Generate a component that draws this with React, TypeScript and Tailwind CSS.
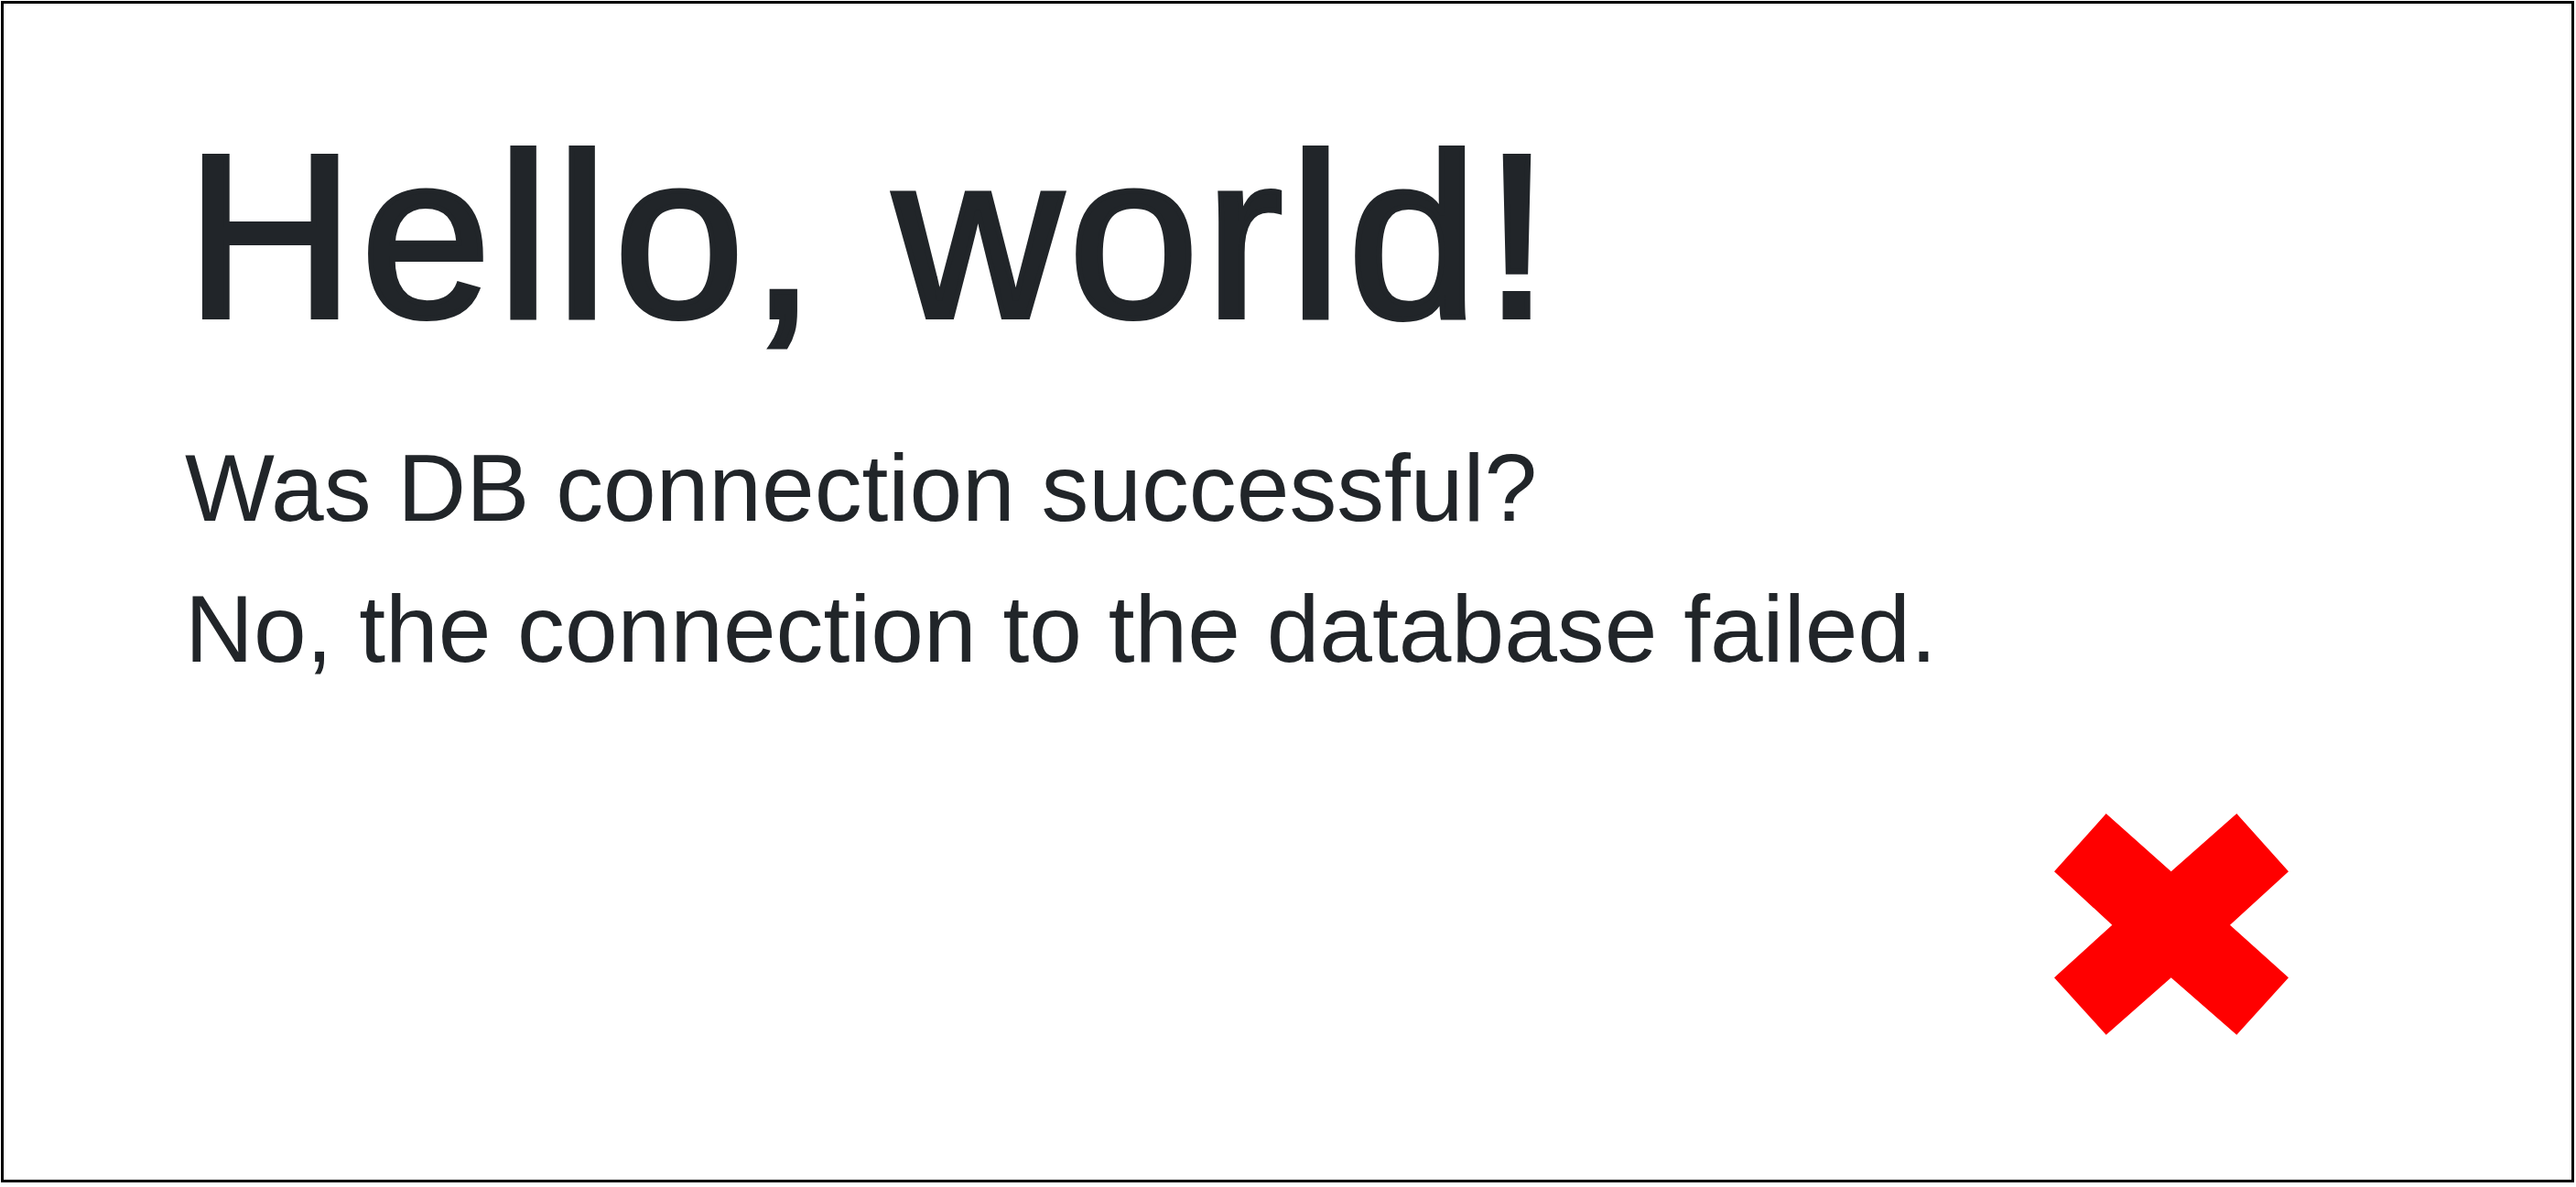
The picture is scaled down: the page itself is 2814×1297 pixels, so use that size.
import React from "react";

function RedCross() {
  return (
    <svg width="256" height="242" viewBox="0 0 256 242" className="block">
      <polygon
        points="56.7,0 127.7,63.3 199.3,0 256,63.3 192,121.7 256,179.3 199.3,241.7 127.7,179.3 56.7,241.7 0,179.3 63.3,121.7 0,63.3"
        fill="#ff0000"
      />
    </svg>
  );
}

export default function App() {
  return (
    <div className="w-[2814px] h-[1297px] bg-white pl-[1px] pt-[1px]">
      <div className="w-[2811px] h-[1291px] border-[3px] border-black bg-white pl-[198px] pt-[98px] text-[#212529] [font-family:'Liberation_Sans',Arial,sans-serif]">
        <h1 className="ml-[1px] text-[255px] leading-[311px] font-normal tracking-[7.2px] m-0 [-webkit-text-stroke:6px_#212529]">
          Hello, world!
        </h1>
        <div className="mt-[43px] text-[103.7px] leading-[154px]">
          <div>Was DB connection successful?</div>
          <div>No, the connection to the database failed.</div>
        </div>
        <div className="mt-[125px] pl-[2042px]">
          <RedCross />
        </div>
      </div>
    </div>
  );
}
